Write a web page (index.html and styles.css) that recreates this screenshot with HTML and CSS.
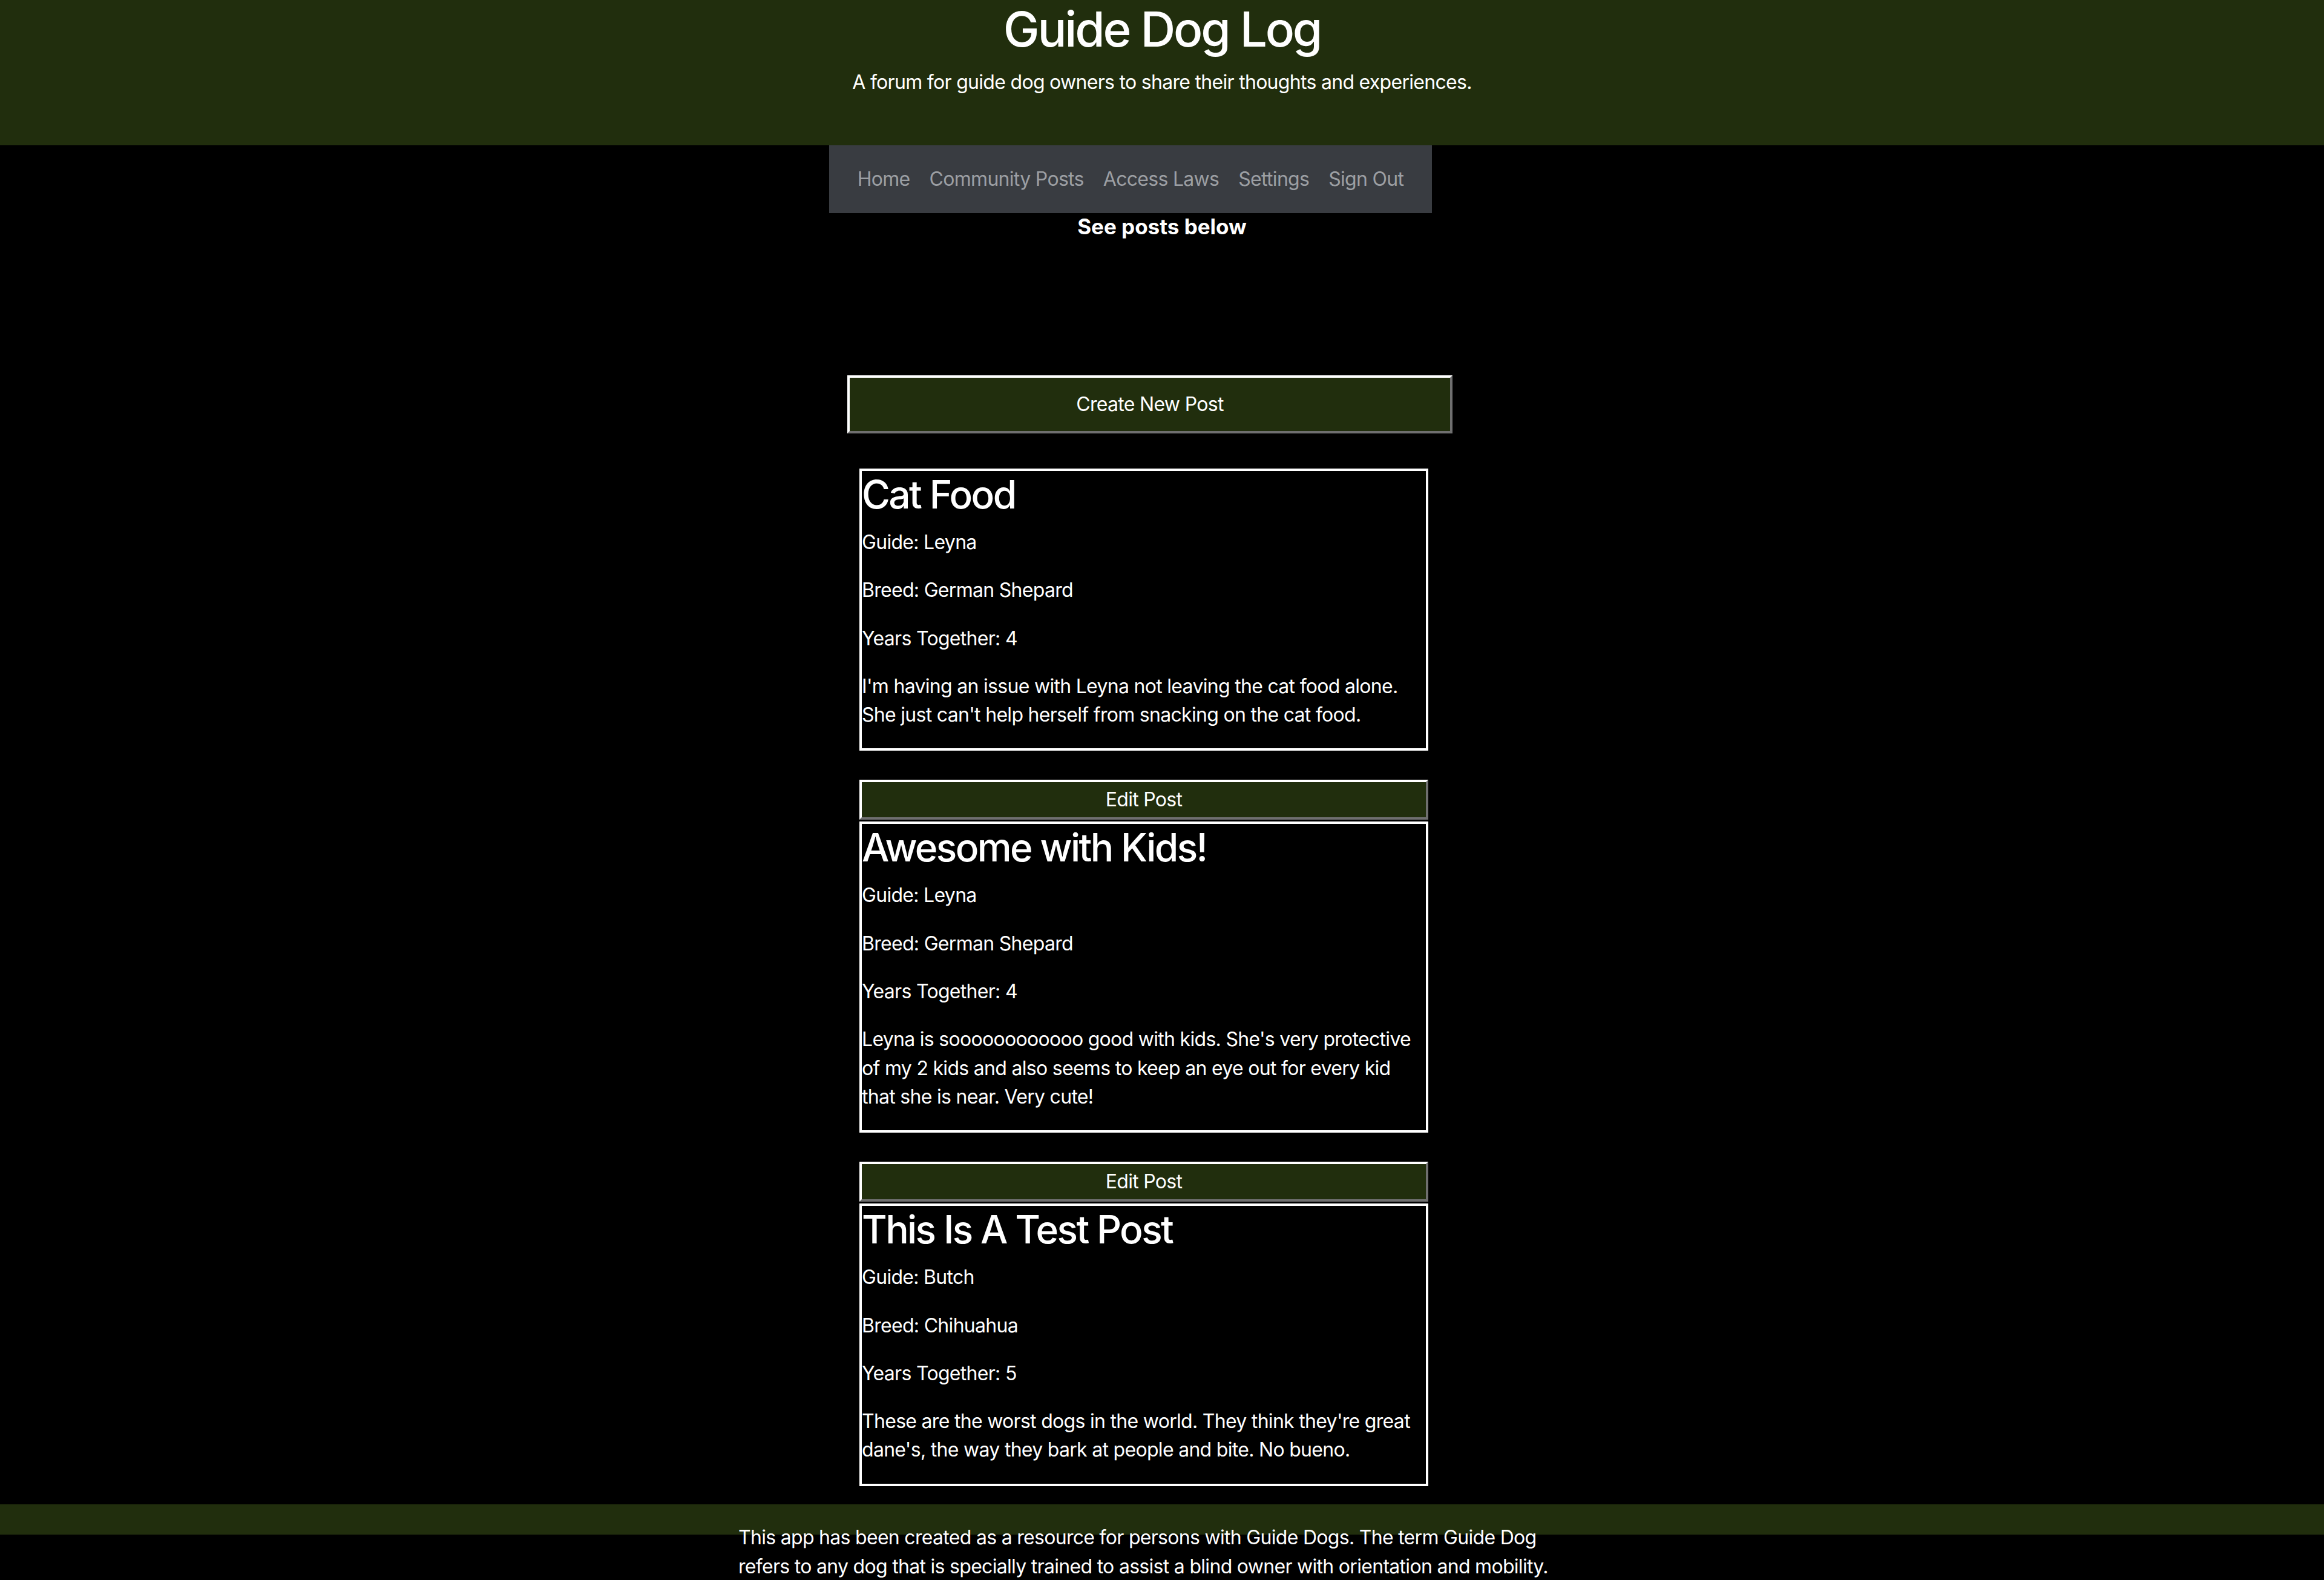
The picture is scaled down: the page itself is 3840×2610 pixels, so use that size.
FILE: index.html
```html
<!DOCTYPE html>
<html lang="en">
<head>
<meta charset="utf-8">
<title>Guide Dog Log</title>
<link rel="stylesheet" href="styles.css">
</head>
<body>
<header class="site-header">
  <h1 class="site-title">Guide Dog Log</h1>
  <p class="site-tagline">A forum for guide dog owners to share their thoughts and experiences.</p>
</header>
<nav class="main-nav">
  <a class="nav-link" href="#">Home</a>
  <a class="nav-link" href="#">Community Posts</a>
  <a class="nav-link" href="#">Access Laws</a>
  <a class="nav-link" href="#">Settings</a>
  <a class="nav-link" href="#">Sign Out</a>
</nav>
<p class="posts-label">See posts below</p>
<main class="posts">
  <button class="btn create-btn" type="button">Create New Post</button>
  <article class="post-card first-card">
    <h2 class="post-title">Cat Food</h2>
    <p class="post-line">Guide: Leyna</p>
    <p class="post-line">Breed: German Shepard</p>
    <p class="post-line">Years Together: 4</p>
    <p class="post-line">I'm having an issue with Leyna not leaving the cat food alone. She just can't help herself from snacking on the cat food.</p>
  </article>
  <button class="btn edit-btn" type="button">Edit Post</button>
  <article class="post-card">
    <h2 class="post-title">Awesome with Kids!</h2>
    <p class="post-line">Guide: Leyna</p>
    <p class="post-line">Breed: German Shepard</p>
    <p class="post-line">Years Together: 4</p>
    <p class="post-line">Leyna is soooooooooooo good with kids. She's very protective of my 2 kids and also seems to keep an eye out for every kid that she is near. Very cute!</p>
  </article>
  <button class="btn edit-btn" type="button">Edit Post</button>
  <article class="post-card">
    <h2 class="post-title">This Is A Test Post</h2>
    <p class="post-line">Guide: Butch</p>
    <p class="post-line">Breed: Chihuahua</p>
    <p class="post-line">Years Together: 5</p>
    <p class="post-line">These are the worst dogs in the world. They think they're great dane's, the way they bark at people and bite. No bueno.</p>
  </article>
</main>
<footer class="site-footer">
  <p class="footer-text">This app has been created as a resource for persons with Guide Dogs. The term Guide Dog refers to any dog that is specially trained to assist a blind owner with orientation and mobility.</p>
</footer>
</body>
</html>
```

FILE: styles.css
```css
html, body {
  margin: 0;
  padding: 0;
  background: #000;
  color: #fff;
  font-family: Inter, "Noto Sans", "Liberation Sans", sans-serif;
  font-size: 32px;
  line-height: 48px;
  letter-spacing: -0.7px;
}

.site-header {
  background: #212e0d;
  height: 240px;
  box-sizing: border-box;
  text-align: center;
}

.site-title {
  margin: 0;
  font-size: 80px;
  line-height: 96px;
  font-weight: 500;
  letter-spacing: -3.2px;
}

.site-tagline {
  margin: 16px 0 0;
}

.main-nav {
  margin-left: 1370px;
  width: 996px;
  height: 112px;
  background: #393c41;
  display: flex;
  align-items: center;
  justify-content: center;
}

.nav-link {
  color: #9c9fa3;
  text-decoration: none;
  padding: 0 16px;
  line-height: 48px;
}

.posts-label {
  margin: 0;
  text-align: center;
  font-weight: 700;
  font-size: 35px;
  line-height: 44px;
  letter-spacing: 0;
}

.posts {
  width: 1000px;
  margin: 224px 0 0 calc(50% - 520px);
  display: flex;
  flex-direction: column;
}

.btn {
  display: block;
  box-sizing: border-box;
  background: #212e0d;
  color: #fff;
  font: inherit;
  letter-spacing: inherit;
  border-style: solid;
  border-width: 4px;
  border-color: #ffffff #6f6f6f #6f6f6f #ffffff;
  padding: 0;
  margin: 0;
  text-align: center;
}

.create-btn {
  width: 1000px;
  height: 96px;
}

.edit-btn {
  width: 940px;
  height: 66px;
  margin: 48px 20px 3px;
}

.post-card {
  box-sizing: border-box;
  width: 940px;
  margin: 0 20px;
  border: 4px solid #fff;
}

.first-card {
  margin-top: 58px;
}

.post-title {
  margin: 0 0 16px;
  font-size: 64px;
  line-height: 78px;
  font-weight: 500;
  letter-spacing: -2.6px;
}

.post-line {
  margin: 0 0 32px;
  line-height: 47.3px;
}

.site-footer {
  margin-top: 30px;
  padding-top: 31px;
  background: linear-gradient(#212e0d 0, #212e0d 50px, transparent 50px);
}

.footer-text {
  width: 1400px;
  margin: 0 auto;
}
```
